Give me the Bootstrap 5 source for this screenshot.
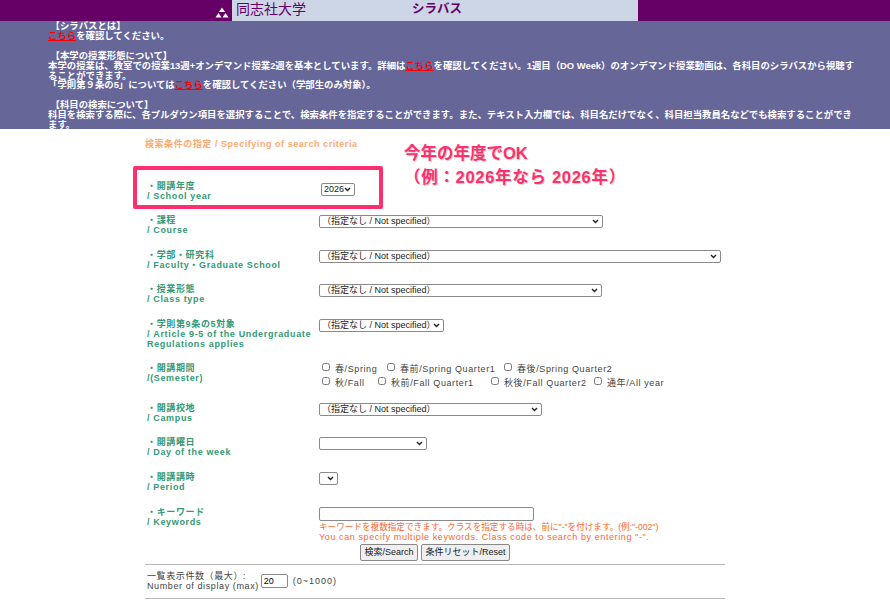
<!DOCTYPE html>
<html lang="ja"><head><meta charset="utf-8"><title>シラバス</title>
<link href="https://cdn.jsdelivr.net/npm/bootstrap@5.3.0/dist/css/bootstrap.min.css" rel="stylesheet">
<style>
html,body{height:608px;overflow:hidden}
body{position:relative;font-family:"Liberation Sans","Noto Sans CJK JP",sans-serif;background:#fff;color:#333}
.topbar{height:21px;background:#660066}
.topmid{margin-left:232px;width:406px;background:#ccd6e6;height:21px;color:#660066;padding-left:4px}
.logo-box{width:14px;height:19px;margin-left:-21px;margin-right:7px;flex:none}
.uni{font-family:"Liberation Serif","Noto Sans CJK JP",serif;font-size:14px;line-height:19px;width:176px;flex:none}
.syl{font-size:12.5px;line-height:19px;font-weight:700}
.info{height:108px;background:#666699;color:#fff;font-size:9.4px;font-weight:700;line-height:9.9px;padding:0 30px 0 48px}
.info a{color:#ff0000}
.info p{margin:0 0 9.9px}
.info p:last-child{margin:0}
.sheet{width:580px;margin-left:145px;padding-top:9px}
.crit{font-size:9px;font-weight:700;color:#ffa870;letter-spacing:.55px;line-height:12px;margin-bottom:31px}
.frow{display:flex}
.lab{width:174px;flex:none;font-size:9px;font-weight:700;color:#339977;letter-spacing:.65px;line-height:10px;padding-left:2px}
.rh{height:34.6px}
.rh0{height:34px}
.rh3{height:44px}
.rh4{height:40px}
.ctl{flex:1;min-width:0}
.pick{height:13px;font-size:9px;font-family:"Liberation Sans","Noto Sans CJK JP",sans-serif;color:#222;background:#fff url("data:image/svg+xml,%3Csvg xmlns='http://www.w3.org/2000/svg' width='7' height='5'%3E%3Cpath d='M1 1l2.5 2.5L6 1' fill='none' stroke='%23222' stroke-width='1.4'/%3E%3C/svg%3E") no-repeat right 3px center;border:1px solid #8a8a8a;border-radius:2px;padding:0 0 0 2px;display:block;line-height:11px;appearance:none;-webkit-appearance:none}
.w-a{width:284px}.w-b{width:402px}.w-c{width:283px}.w-d{width:125px}.w-e{width:223px}.w-f{width:108px}.w-g{width:19px}.w-y{width:34px;margin:2px 0 0 2px}
.chk{font-size:9px;color:#444;letter-spacing:.6px;line-height:13px;display:flex;height:13px;margin-bottom:1px;padding-left:3px;white-space:nowrap}
.chk input{width:8px;height:8px;margin:0 5px 0 0;flex:none;appearance:auto;-webkit-appearance:auto}
.chk span{display:inline-block}
.kw{width:215px;height:14px;border:1px solid #8a8a8a;border-radius:2px;display:block;padding:0}
.hint{font-size:9px;color:#ff6633;letter-spacing:.6px;line-height:10.5px;margin-top:1px;white-space:nowrap}
.hint-jp{font-size:8.6px;letter-spacing:0}
.acts{display:flex;justify-content:center;gap:3px;margin:1px 0 3px;padding-right:0}
.bt{height:17px;font-size:9px;line-height:15px;padding:0 3.5px;background:#efefef;border:1px solid #888;border-radius:2px;color:#222;font-family:inherit}
.rule{height:1px;background:#b8b8b8}
.cnt{display:flex;align-items:center;font-size:9px;color:#444;line-height:10px;letter-spacing:.6px;height:33px;padding-left:2px}
.cnt input{width:27px;height:14px;font-size:9px;padding:0 2px;border:1px solid #8a8a8a;border-radius:2px;margin:0 5px 0 2px}
.rng{letter-spacing:1px}
.hl{position:absolute;left:133px;top:166px;width:250px;height:43px;border:4px solid #ff2f6e;border-radius:2px}
.note{position:absolute;left:404px;top:141px;color:#ff2f6e;font-size:16.5px;font-weight:700;line-height:24px;text-shadow:1px 1px 1px rgba(0,0,0,.2);white-space:nowrap}
.note span{display:block}
.note span+span{letter-spacing:.7px}
</style></head><body>
<div class="topbar"><div class="topmid d-flex align-items-start">
<div class="logo-box"><svg width="14" height="19" viewBox="0 0 14 19"><g fill="#fff"><path d="M7 4.5 10 9H4Z"/><path d="M3.5 10 6.5 14.5H.5Z"/><path d="M10.5 10 13.5 14.5H7.5Z"/></g></svg></div>
<div class="uni">同志社大学</div><div class="syl">シラバス</div></div></div>
<div class="info">
<p>&nbsp;【シラバスとは】<br><a href="#">こちら</a>を確認してください。</p>
<p>&nbsp;【本学の授業形態について】<br>本学の授業は、教室での授業13週+オンデマンド授業2週を基本としています。詳細は<a href="#">こちら</a>を確認してください。1週目（DO Week）のオンデマンド授業動画は、各科目のシラバスから視聴することができます。<br>「学則第９条の5」については<a href="#">こちら</a>を確認してください（学部生のみ対象）。</p>
<p>&nbsp;【科目の検索について】<br>科目を検索する際に、各プルダウン項目を選択することで、検索条件を指定することができます。また、テキスト入力欄では、科目名だけでなく、科目担当教員名などでも検索することができます。</p>
</div>
<div class="sheet">
<div class="crit">検索条件の指定 / Specifying of search criteria</div>
<div class="frow rh0"><div class="lab">・開講年度<br>/ School year</div><div class="ctl"><select class="pick w-y"><option>2026</option></select></div></div>
<div class="frow rh"><div class="lab">・課程<br>/ Course</div><div class="ctl"><select class="pick w-a"><option>（指定なし / Not specified）</option></select></div></div>
<div class="frow rh"><div class="lab">・学部・研究科<br>/ Faculty・Graduate School</div><div class="ctl"><select class="pick w-b"><option>（指定なし / Not specified）</option></select></div></div>
<div class="frow rh"><div class="lab">・授業形態<br>/ Class type</div><div class="ctl"><select class="pick w-c"><option>（指定なし / Not specified）</option></select></div></div>
<div class="frow rh3"><div class="lab">・学則第9条の5対象<br>/ Article 9-5 of the Undergraduate Regulations applies</div><div class="ctl"><select class="pick w-d"><option>（指定なし / Not specified）</option></select></div></div>
<div class="frow rh4"><div class="lab">・開講期間<br>/(Semester)</div><div class="ctl">
<div class="chk"><input type="checkbox"><span style="width:52px">春/Spring</span><input type="checkbox"><span style="width:104px">春前/Spring Quarter1</span><input type="checkbox"><span>春後/Spring Quarter2</span></div>
<div class="chk"><input type="checkbox"><span style="width:43px">秋/Fall</span><input type="checkbox"><span style="width:100px">秋前/Fall Quarter1</span><input type="checkbox"><span style="width:90px">秋後/Fall Quarter2</span><input type="checkbox"><span>通年/All year</span></div>
</div></div>
<div class="frow rh"><div class="lab">・開講校地<br>/ Campus</div><div class="ctl"><select class="pick w-e"><option>（指定なし / Not specified）</option></select></div></div>
<div class="frow rh"><div class="lab">・開講曜日<br>/ Day of the week</div><div class="ctl"><select class="pick w-f"><option></option></select></div></div>
<div class="frow rh"><div class="lab">・開講講時<br>/ Period</div><div class="ctl"><select class="pick w-g"><option></option></select></div></div>
<div class="frow"><div class="lab">・キーワード<br>/ Keywords</div><div class="ctl"><input class="kw" type="text">
<div class="hint"><span class="hint-jp">キーワードを複数指定できます。クラスを指定する時は、前に"-"を付けます。(例:"-002")</span><br>You can specify multiple keywords. Class code to search by entering "-".</div></div></div>
<div class="acts"><button class="bt" type="button">検索/Search</button><button class="bt" type="button">条件リセット/Reset</button></div>
<div class="rule"></div>
<div class="cnt"><div>一覧表示件数（最大）:<br>Number of display (max)</div><input type="text" value="20"><div class="rng">(0~1000)</div></div>
<div class="rule"></div>
</div>
<div class="hl"></div>
<div class="note"><span>今年の年度でOK</span><span>（例：2026年なら 2026年）</span></div>
</body></html>
